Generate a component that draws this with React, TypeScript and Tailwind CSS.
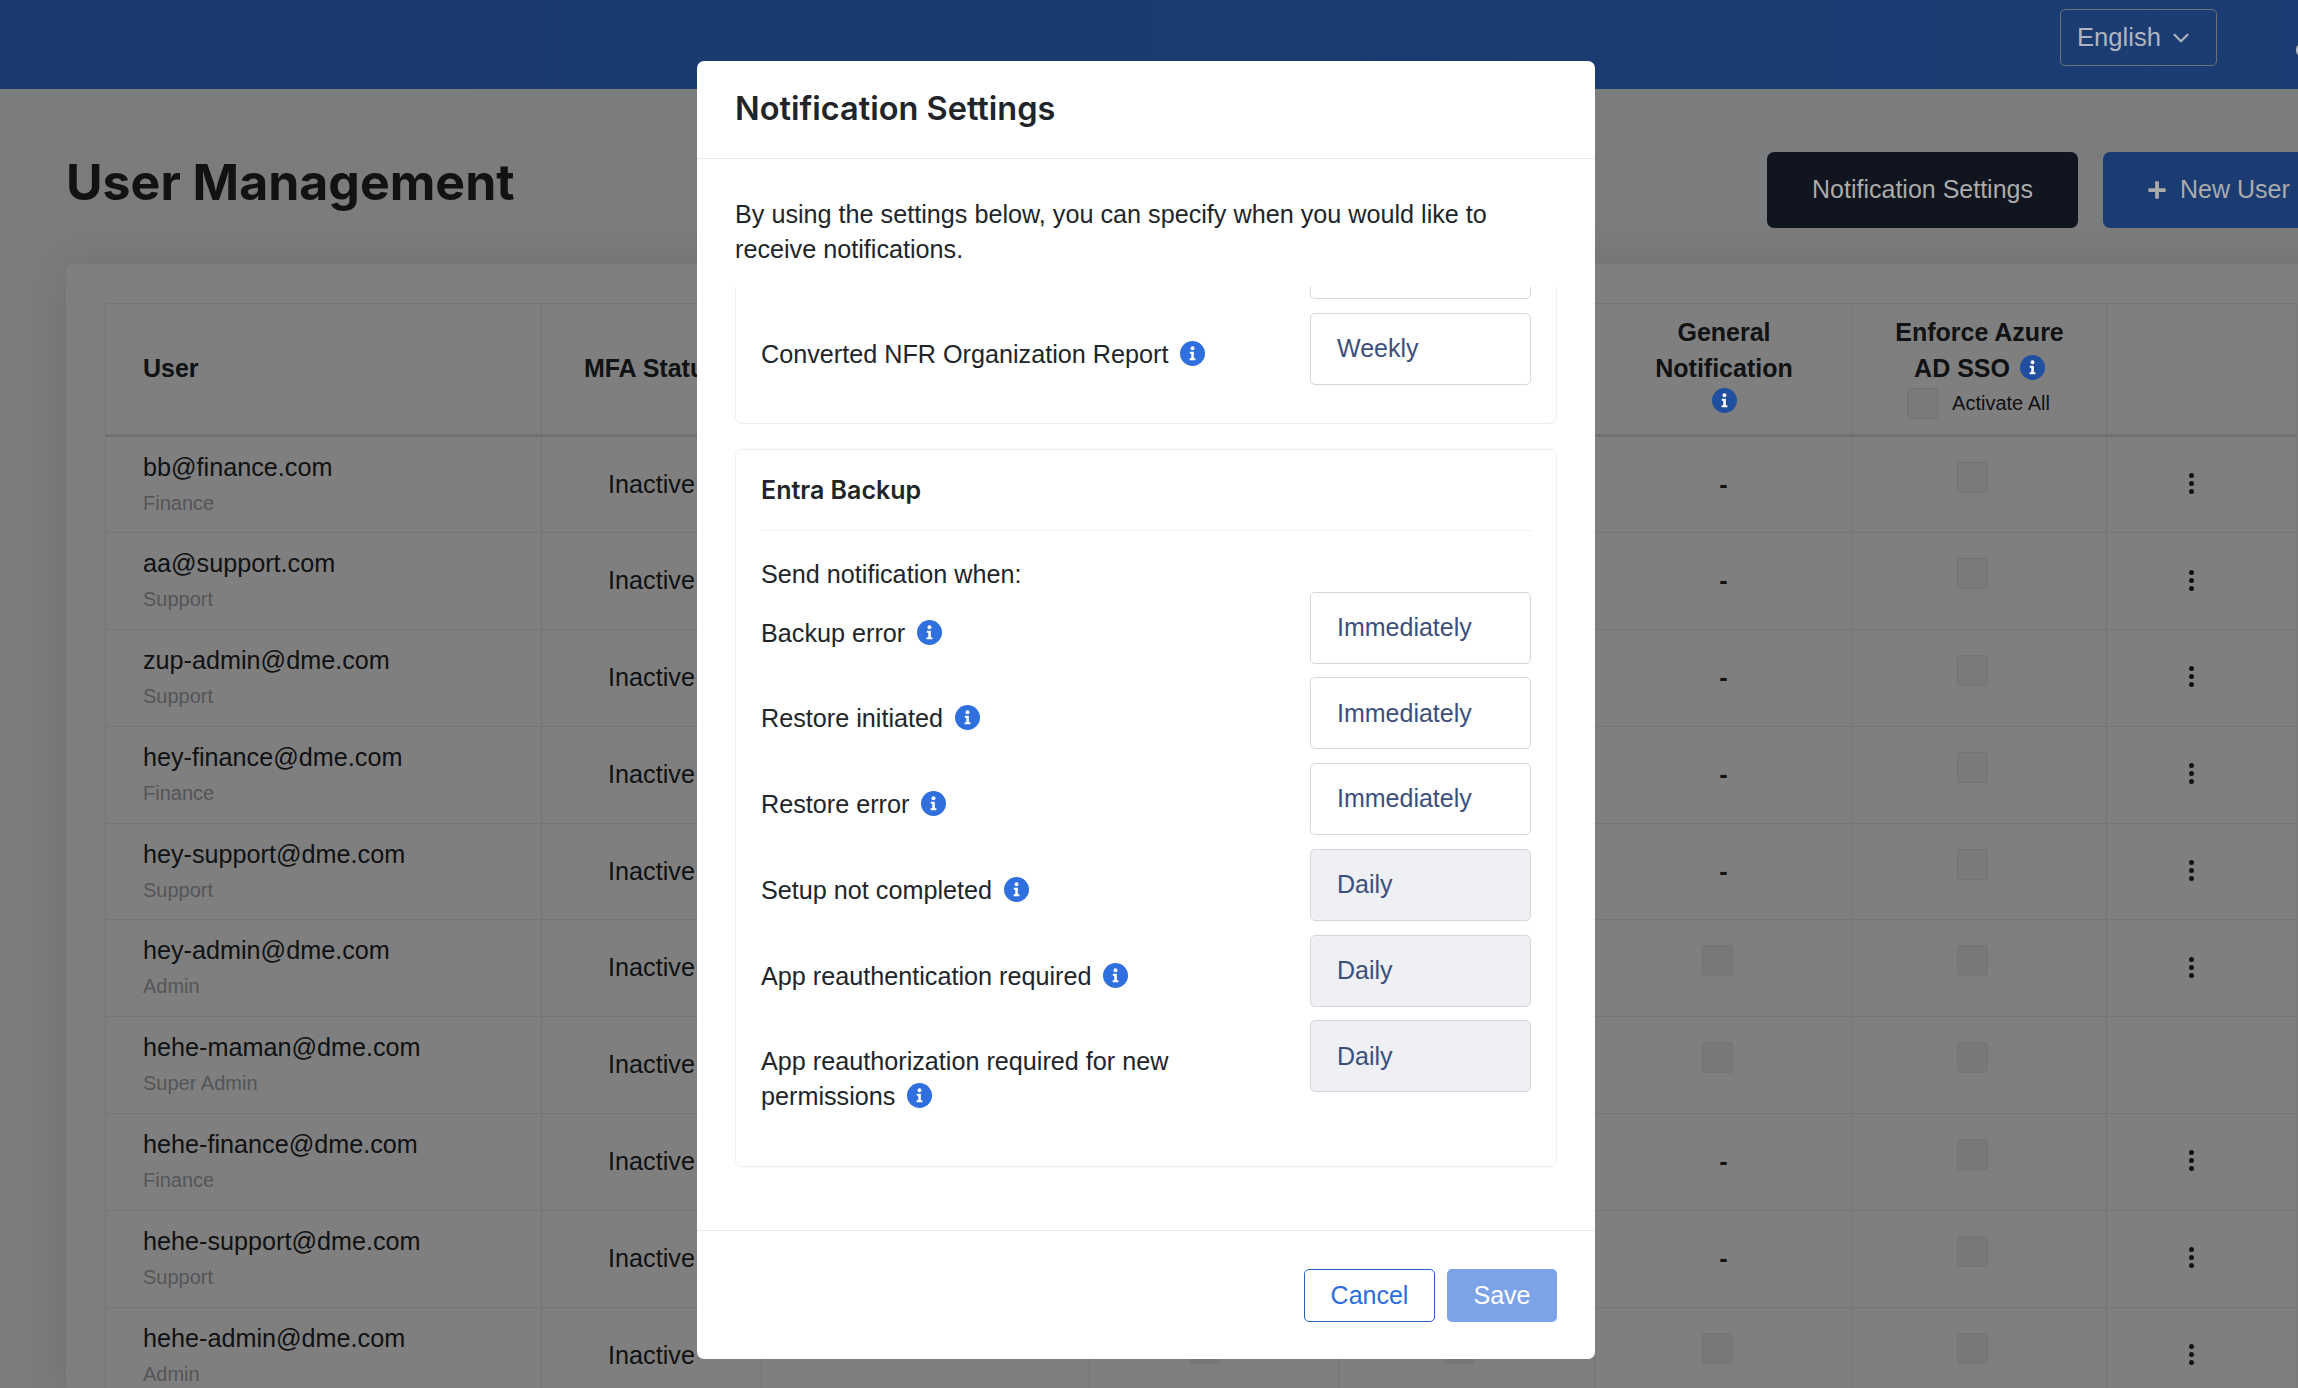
import { ChevronDown } from 'lucide-react';
import { FaPlus } from 'react-icons/fa';

type User = {
  email: string;
  role: string;
  general: boolean; // checkbox instead of a dash
  menu: boolean;
};

const users: User[] = [
  { email: 'bb@finance.com', role: 'Finance', general: false, menu: true },
  { email: 'aa@support.com', role: 'Support', general: false, menu: true },
  { email: 'zup-admin@dme.com', role: 'Support', general: false, menu: true },
  { email: 'hey-finance@dme.com', role: 'Finance', general: false, menu: true },
  { email: 'hey-support@dme.com', role: 'Support', general: false, menu: true },
  { email: 'hey-admin@dme.com', role: 'Admin', general: true, menu: true },
  { email: 'hehe-maman@dme.com', role: 'Super Admin', general: true, menu: false },
  { email: 'hehe-finance@dme.com', role: 'Finance', general: false, menu: true },
  { email: 'hehe-support@dme.com', role: 'Support', general: false, menu: true },
  { email: 'hehe-admin@dme.com', role: 'Admin', general: true, menu: true },
];

const backupRows = [
  { label: 'Backup error', value: 'Immediately', disabled: false },
  { label: 'Restore initiated', value: 'Immediately', disabled: false },
  { label: 'Restore error', value: 'Immediately', disabled: false },
  { label: 'Setup not completed', value: 'Daily', disabled: true },
  { label: 'App reauthentication required', value: 'Daily', disabled: true },
  { label: 'App reauthorization required for new permissions', value: 'Daily', disabled: true },
];

const columns = 'grid w-[2192px] grid-cols-[437px_220px_328px_249px_256px_258px_254px_190px]';

function InfoIcon({ className }: { className: string }) {
  return (
    <svg viewBox="0 0 24 24" className={`inline-block h-[25px] w-[25px] shrink-0 align-[-3px] ${className}`}>
      <circle cx="12" cy="12" r="12" fill="currentColor" />
      <circle cx="12" cy="6.9" r="1.9" fill="#fff" />
      <path d="M9.4 10.3h3.9v6.3h1.5v1.9H9.2v-1.9h1.6v-4.4H9.4z" fill="#fff" />
    </svg>
  );
}

function Checkbox({ dark }: { dark?: boolean }) {
  return (
    <div
      className={`h-[31px] w-[31px] rounded-[3px] border ${
        dark ? 'border-[#e6e8ea] bg-[#eff0f1]' : 'border-[#e4e6e9] bg-[#f4f5f6]'
      }`}
    />
  );
}

function Dots() {
  return (
    <div className="flex flex-col items-center gap-[3px] pr-[20px] pb-[2px]">
      <span className="h-[5px] w-[5px] rounded-full bg-[#212529]" />
      <span className="h-[5px] w-[5px] rounded-full bg-[#212529]" />
      <span className="h-[5px] w-[5px] rounded-full bg-[#212529]" />
    </div>
  );
}

function UserRow({ user, dark }: { user: User; dark: boolean }) {
  const cell = 'border-r border-[#e9ebee]';
  return (
    <div className={`${columns} h-[96.8px] border-b border-[#e9ebee] text-[25.2px] text-[#212529]`}>
      <div className={`${cell} border-l pt-[13px] pl-[37px]`}>
        <div className="leading-[35px]">{user.email}</div>
        <div className="mt-[4px] text-[20px] leading-[28px] text-[#a8acb2]">{user.role}</div>
      </div>
      <div className={`${cell} flex items-center justify-center`}>Inactive</div>
      <div className={cell} />
      <div className={`${cell} flex justify-center pt-[25px] pr-[18px]`}>
        <Checkbox dark={dark} />
      </div>
      <div className={`${cell} flex justify-center pt-[25px] pr-[16px]`}>
        <Checkbox dark={dark} />
      </div>
      <div className={`${cell} flex justify-center ${user.general ? 'pt-[25px] pr-[12px]' : 'items-center'}`}>
        {user.general ? <Checkbox dark={dark} /> : <span className="font-bold">-</span>}
      </div>
      <div className={`${cell} flex justify-center pt-[25px] pr-[14px]`}>
        <Checkbox dark={dark} />
      </div>
      <div className={`${cell} flex items-center justify-center`}>{user.menu && <Dots />}</div>
    </div>
  );
}

function TableHeader() {
  const cell = 'border-r border-[#e9ebee]';
  return (
    <div
      className={`${columns} h-[133.5px] border-t border-b-[3px] border-t-[#e9ebee] border-b-[#dde0e5] text-[25px] leading-[36px] font-bold text-[#212529]`}
    >
      <div className={`${cell} flex items-center border-l pb-[2px] pl-[37px]`}>User</div>
      <div className={`${cell} flex items-center justify-center pb-[2px]`}>MFA Status</div>
      <div className={cell} />
      <div className={cell} />
      <div className={cell} />
      <div className={`${cell} pt-[10px] pl-[1px] text-center`}>
        General
        <br />
        Notification
        <div className="leading-[31px]">
          <InfoIcon className="relative z-10 text-[#1f4f9e]" />
        </div>
      </div>
      <div className={`${cell} pt-[10px] text-center`}>
        Enforce Azure
        <br />
        AD SSO <InfoIcon className="relative z-10 ml-[3px] text-[#1f4f9e]" />
        <div className="-mt-[1px] flex items-center justify-center gap-[14px] pr-[2px] text-[20px] font-normal">
          <Checkbox />
          Activate All
        </div>
      </div>
      <div className={cell} />
    </div>
  );
}

function SelectBox({ value, disabled }: { value?: string; disabled?: boolean }) {
  return (
    <div
      className={`flex h-[72px] w-[221px] shrink-0 items-center rounded-[5px] border border-[#d4d7dd] pl-[26px] text-[25px] text-[#3c4f7c] ${
        disabled ? 'bg-[#eef0f3]' : 'bg-white'
      }`}
    >
      {value}
    </div>
  );
}

function NotificationModal() {
  return (
    <div className="absolute top-[61px] left-[697px] z-20 flex h-[1298px] w-[898px] flex-col rounded-[7px] bg-white text-[25.2px] text-[#212529]">
      <div className="flex h-[98px] shrink-0 items-center border-b border-[#e9ebee] pb-[1px] pl-[38px] font-['Inter',sans-serif] text-[32.5px] font-semibold">
        Notification Settings
      </div>
      <div className="flex min-h-0 flex-1 flex-col px-[38px]">
        <p className="mt-[38px] mb-[20px] shrink-0 leading-[35px]">
          By using the settings below, you can specify when you would like to receive notifications.
        </p>
        <div className="min-h-0 flex-1 overflow-hidden">
          {/* scrolled part of the list, only the bottom of the first box shows */}
          <div className="-mt-[61px] rounded-[7px] border border-[#eceef1] px-[25px] pb-[38px]">
            <div className="flex justify-end">
              <SelectBox />
            </div>
            <div className="mt-[14px] flex justify-between">
              <div className="pt-[24px] leading-[35px]">
                Converted NFR Organization Report <InfoIcon className="ml-[5px] text-[#2f6fde]" />
              </div>
              <SelectBox value="Weekly" />
            </div>
          </div>

          <div className="mt-[24.5px] rounded-[7px] border border-[#eceef1] px-[25px] pb-[52px]">
            <div className="flex h-[81px] items-center border-b border-[#f0f1f3] pt-[2px] font-['Inter',sans-serif] text-[25px] font-semibold">
              Entra Backup
            </div>
            <div className="mt-[26px] leading-[35px]">Send notification when:</div>
            <div className="flex flex-col gap-[13.8px]">
              {backupRows.map((row) => (
                <div key={row.label} className="flex justify-between">
                  <div className="w-[480px] pt-[24px] leading-[35px]">
                    {row.label} <InfoIcon className="ml-[5px] text-[#2f6fde]" />
                  </div>
                  <SelectBox value={row.value} disabled={row.disabled} />
                </div>
              ))}
            </div>
          </div>
        </div>
      </div>
      <div className="flex h-[129px] shrink-0 justify-end gap-[12px] border-t border-[#e9ebee] pt-[38px] pr-[38px]">
        <button
          type="button"
          className="h-[53px] w-[131px] rounded-[5px] border border-[#2562c4] bg-white text-[25px] text-[#2d6cdf]"
        >
          Cancel
        </button>
        <button type="button" className="h-[53px] w-[110px] rounded-[5px] bg-[#7ca3e8] text-[25px] text-white">
          Save
        </button>
      </div>
    </div>
  );
}

export default function App() {
  return (
    <div className="relative h-[1388px] w-[2298px] overflow-hidden bg-[#f7f8fa] font-['Liberation_Sans',Arial,sans-serif]">
      <header className="flex h-[89px] items-start justify-end bg-gradient-to-r from-[#3574dc] to-[#367ae6] pt-[9px] pr-[81px]">
        <div className="flex h-[57px] w-[157px] items-center gap-[7px] rounded-[5px] border border-[#dfe3ea] pl-[16px] text-[25.6px]">
          <span className="relative z-10 text-[#aeb4c0]">English</span>
          <ChevronDown size={26} className="relative z-10 text-[#aeb4c0]" />
        </div>
      </header>
      {/* account menu, cut off by the window */}
      <span className="absolute top-[44px] left-[2296px] z-10 h-[12px] w-[10px] rounded-full bg-[#aeb4c0]" />

      <main className="w-[2500px] px-[66px]">
        <div className="flex h-[175px] w-[2166px] justify-between">
          <h1 className="mt-[57px] font-['Inter',sans-serif] text-[50px] leading-[72px] font-bold text-[#212529]">
            User Management
          </h1>
          <div className="mt-[63px] -mr-[102px] flex h-[76px] gap-[25px] text-[25px]">
            <button type="button" className="w-[311px] rounded-[7px] bg-[#212a3e]">
              <span className="relative z-10 text-[#ababab]">Notification Settings</span>
            </button>
            <button type="button" className="flex w-[231px] items-center gap-[13px] rounded-[7px] bg-[#3478e4] pl-[44px]">
              <FaPlus size={20} className="relative z-10 text-[#ababab]" />
              <span className="relative z-10 text-[#ababab]">New User</span>
            </button>
          </div>
        </div>
        <div className="rounded-[7px] bg-white pt-[39px] pl-[39px] shadow-[0_0_40px_rgba(40,50,70,0.12)]">
          <TableHeader />
          {users.map((user, i) => (
            <UserRow key={user.email} user={user} dark={i > 4} />
          ))}
        </div>
      </main>

      {/* modal backdrop */}
      <div className="absolute inset-0 bg-black/50" />
      <NotificationModal />
    </div>
  );
}
